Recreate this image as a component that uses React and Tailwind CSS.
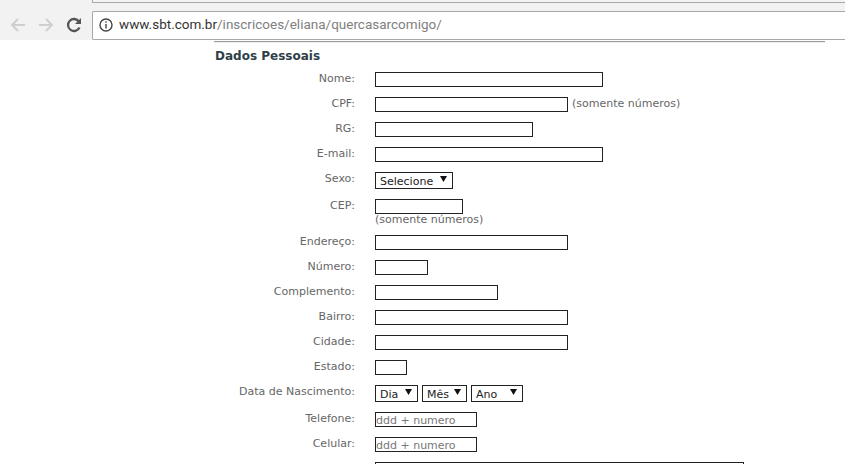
import React from "react";

function Row({ label, mb = "mb-[10px]", children }) {
  return (
    <div className={`flex items-start ${mb}`}>
      <div className="w-[141px] shrink-0 text-right text-[11px] leading-[13px] text-[#666]">{label}</div>
      <div className="ml-[20px] flex items-start">{children}</div>
    </div>
  );
}

function Input({ w, placeholder }) {
  return (
    <div className={`${w} h-[15px] shrink-0 border border-[#222] bg-white box-border text-[11px] leading-[15px] text-[#777] overflow-hidden whitespace-nowrap`}>
      {placeholder}
    </div>
  );
}

function Select({ w, children }) {
  return (
    <div className={`${w} h-[17px] border border-[#222] bg-white box-border flex items-center justify-between pl-1 pr-[5px] text-[11px] text-[#222]`}>
      <span className="leading-[15px] pt-[1px]">{children}</span>
      <svg width="7" height="6" viewBox="0 0 7 6" className="mb-[3px]"><path d="M0 0h7L3.5 6z" fill="#111" /></svg>
    </div>
  );
}

export default function App() {
  return (
    <div className="h-[464px] w-[845px] overflow-hidden bg-white font-['DejaVu_Sans','Liberation_Sans',sans-serif]">
      <div className="h-[40px] bg-[#f2f2f2] relative">
        <div className="absolute left-[92px] right-0 top-0 h-[3px] border-b border-l border-[#a8a8a8] bg-[#f4f4f4]" />
        <div className="flex items-center h-full pt-[10px]">
          <svg width="18" height="18" viewBox="0 0 18 18" className="ml-[9px] mt-[-1px]" fill="none" stroke="#cfcfcf" strokeWidth="2"><path d="M16 9H3M9 3L3 9l6 6" /></svg>
          <svg width="18" height="18" viewBox="0 0 18 18" className="ml-[10px] mt-[-1px]" fill="none" stroke="#cfcfcf" strokeWidth="2"><path d="M2 9h13M9 3l6 6-6 6" /></svg>
          <svg width="18" height="18" viewBox="0 0 18 18" className="ml-[10px] mt-[-1px]" fill="none" stroke="#555" strokeWidth="2.3"><path d="M14.5 11.5A6 6 0 1 1 14 5.6" /><path d="M16 2v6h-6z" fill="#555" stroke="none" /></svg>
          <div className="ml-[9px] flex-1 h-[29px] border border-[#a8a8a8] border-r-0 rounded-l-[2px] bg-white flex items-center pl-[6px]">
            <svg width="14" height="14" viewBox="0 0 14 14" fill="none" stroke="#444" strokeWidth="1.4"><circle cx="7" cy="7" r="6" /><path d="M7 6v4.5M7 3.2v1.5" /></svg>
            <span className="ml-[6px] text-[13.5px] font-['Roboto','Liberation_Sans',sans-serif] leading-none">
              <span className="text-[#333]">www.sbt.com.br</span>
              <span className="text-[#808080]">/inscricoes/eliana/quercasarcomigo/</span>
            </span>
          </div>
        </div>
      </div>
      <div className="ml-[214px] w-[611px] h-[2px] mt-[1px] border-t border-[#999] bg-[#eee]" />
      <div className="pl-[214px] pt-[5px]">
        <div className="ml-px text-[12px] font-bold leading-[16px] text-[#2f3f49] mb-[8px]">Dados Pessoais</div>
        <Row label="Nome:"><Input w="w-[228px]" /></Row>
        <Row label="CPF:">
          <Input w="w-[193px]" />
          <span className="ml-[4px] text-[11px] leading-[14px] text-[#666]">(somente números)</span>
        </Row>
        <Row label="RG:"><Input w="w-[158px]" /></Row>
        <Row label="E-mail:"><Input w="w-[228px]" /></Row>
        <Row label="Sexo:"><Select w="w-[78px]">Selecione</Select></Row>
        <Row label="CEP:">
          <div className="flex flex-col">
            <Input w="w-[88px]" />
            <span className="text-[11px] leading-[10px] mt-px text-[#666] whitespace-nowrap">(somente números)</span>
          </div>
        </Row>
        <Row label="Endereço:"><Input w="w-[193px]" /></Row>
        <Row label="Número:"><Input w="w-[53px]" /></Row>
        <Row label="Complemento:"><Input w="w-[123px]" /></Row>
        <Row label="Bairro:"><Input w="w-[193px]" /></Row>
        <Row label="Cidade:"><Input w="w-[193px]" /></Row>
        <Row label="Estado:"><Input w="w-[32px]" /></Row>
        <Row label="Data de Nascimento:">
          <div className="flex gap-[4px]">
            <Select w="w-[43px]">Dia</Select>
            <Select w="w-[45px]">Mês</Select>
            <Select w="w-[52px]">Ano</Select>
          </div>
        </Row>
        <Row label="Telefone:"><Input w="w-[102px]" placeholder="ddd + numero" /></Row>
        <Row label="Celular:"><Input w="w-[102px]" placeholder="ddd + numero" /></Row>
        <Row label="Foto:"><Input w="w-[369px]" /></Row>
      </div>
    </div>
  );
}
